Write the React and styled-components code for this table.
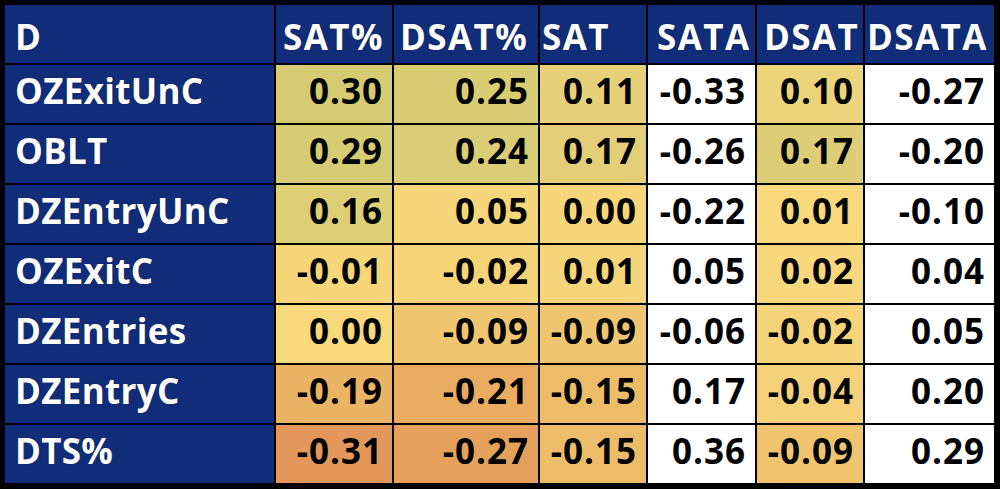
import React from "react";
import styled, { createGlobalStyle } from "styled-components";

const Global = createGlobalStyle`
  html, body { margin: 0; padding: 0; background: #000; }
  body { width: 1000px; height: 489px; overflow: hidden; }
`;

const Grid = styled.div`
  display: grid;
  grid-template-columns: 269px 116px 144px 106px 107px 106px 129px;
  grid-auto-rows: 58px;
  gap: 2px;
  padding: 5px 6px 6px 5px;
  background: #000;
  width: 1000px;
  height: 489px;
  box-sizing: border-box;
  font-family: "Open Sans", "Noto Sans", sans-serif;
  font-weight: 700;
  font-size: 35px;
`;

const HeadCell = styled.div`
  background: #112c78;
  color: #fff;
  display: flex;
  align-items: center;
  padding: 5px 0 0 ${(p) => p.$pad}px;
  box-sizing: border-box;
  text-shadow: 0 0 1px rgba(0, 0, 0, 0.6);
  letter-spacing: 1.4px;
  white-space: nowrap;
  overflow: hidden;
`;

const NameCell = styled.div`
  background: #112c78;
  color: #fff;
  display: flex;
  align-items: center;
  padding: 0 0 7px 10px;
  box-sizing: border-box;
  text-shadow: 0 0 1px rgba(0, 0, 0, 0.6);
  letter-spacing: 0.3px;
  white-space: nowrap;
`;

const ValueCell = styled.div`
  background: ${(p) => p.$bg};
  color: #000;
  display: flex;
  align-items: center;
  justify-content: flex-end;
  padding: 0 9px 7px 0;
  box-sizing: border-box;
  letter-spacing: 1px;
  white-space: nowrap;
`;

const headers = [
  ["D", 10],
  ["SAT%", 7],
  ["DSAT%", 6],
  ["SAT", 2],
  ["SATA", 9],
  ["DSAT", 7],
  ["DSATA", 2],
];

const rows = [
  ["OZExitUnC", [0.3, 0.25, 0.11, -0.33, 0.1, -0.27]],
  ["OBLT", [0.29, 0.24, 0.17, -0.26, 0.17, -0.2]],
  ["DZEntryUnC", [0.16, 0.05, 0.0, -0.22, 0.01, -0.1]],
  ["OZExitC", [-0.01, -0.02, 0.01, 0.05, 0.02, 0.04]],
  ["DZEntries", [0.0, -0.09, -0.09, -0.06, -0.02, 0.05]],
  ["DZEntryC", [-0.19, -0.21, -0.15, 0.17, -0.04, 0.2]],
  ["DTS%", [-0.31, -0.27, -0.15, 0.36, -0.09, 0.29]],
];

const W = "#ffffff";
const colors = [
  ["#d5cb72", "#d6cc73", "#dccf76", "#f7d67a", "#f8d97c", "#ebb464", "#e3975a"],
  ["#d9cd74", "#d9cd75", "#f5d67a", "#f5d478", "#f0c570", "#e9ac60", "#e5a05c"],
  ["#e6d178", "#e2cf77", "#f7d67a", "#f5d57a", "#f0c570", "#edbc69", "#edbc69"],
  [W, W, W, W, W, W, W],
  ["#ebd47a", "#dccd76", "#f8d97c", "#f8d87c", "#f6d47a", "#f5d279", "#f0c46f"],
  [W, W, W, W, W, W, W],
];

const fmt = (v) => (v < 0 ? "-" + Math.abs(v).toFixed(2) : v.toFixed(2));

export default function App() {
  return (
    <>
      <Global />
      <Grid>
        {headers.map(([h, pad]) => (
          <HeadCell key={h} $pad={pad}>
            {h}
          </HeadCell>
        ))}
        {rows.map(([name, vals], r) => (
          <React.Fragment key={name}>
            <NameCell>{name}</NameCell>
            {vals.map((v, c) => (
              <ValueCell key={c} $bg={colors[c][r]}>
                {fmt(v)}
              </ValueCell>
            ))}
          </React.Fragment>
        ))}
      </Grid>
    </>
  );
}
